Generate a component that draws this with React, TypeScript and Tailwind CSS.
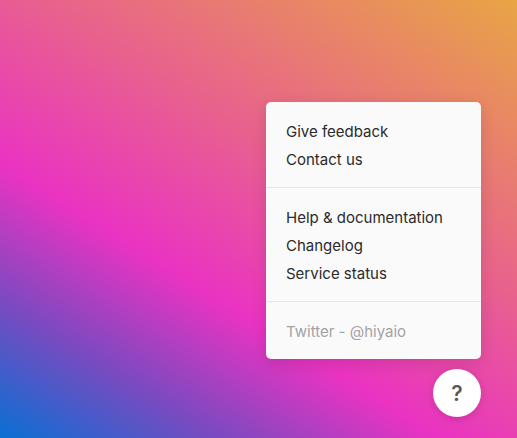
import React from "react";

export default function App() {
  const font = { fontFamily: "Inter, 'Noto Sans', sans-serif" };
  const items1 = ["Give feedback", "Contact us"];
  const items2 = ["Help & documentation", "Changelog", "Service status"];
  return (
    <div
      className="w-[517px] h-[438px] flex flex-col items-end justify-end pr-[36px] pb-[21px] bg-[linear-gradient(32deg,#0870d4_0%,#7a4ac0_18%,#ea33c2_36%,#e8608f_60%,#e8a545_100%)]"
      style={font}
    >
      <div className="w-[215px] bg-[#fafafa] rounded-[5px] shadow-[0_4px_16px_rgba(0,0,0,0.12)] text-[15px] leading-[28px] text-[#2b2b2b]">
        <div className="pt-[16px] pb-[13px] px-[20px] border-b border-[#e6e6e6]">
          {items1.map((t) => (
            <div key={t} className="h-[28px]">{t}</div>
          ))}
        </div>
        <div className="pt-[16px] pb-[13px] px-[20px] border-b border-[#e6e6e6]">
          {items2.map((t) => (
            <div key={t} className="h-[28px]">{t}</div>
          ))}
        </div>
        <div className="pt-[16px] pb-[13px] px-[20px] text-[#a3a3a3]">
          <div className="h-[28px]">Twitter - @hiyaio</div>
        </div>
      </div>
      <div className="mt-[10px] w-[48px] h-[48px] rounded-full bg-white shadow-[0_2px_8px_rgba(0,0,0,0.15)] flex items-center justify-center text-[21px] font-semibold text-[#5a5a5a] leading-none">
        ?
      </div>
    </div>
  );
}
